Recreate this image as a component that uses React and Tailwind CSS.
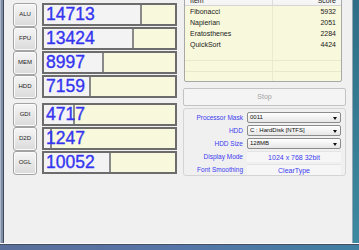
export default function App() {
  const group1 = [
    { label: "ALU", value: "14713", w: 98 },
    { label: "FPU", value: "13424", w: 90 },
    { label: "MEM", value: "8997", w: 60 },
    { label: "HDD", value: "7159", w: 47 },
  ];
  const group2 = [
    { label: "GDI", value: "4717", w: 31 },
    { label: "D2D", value: "1247", w: 8 },
    { label: "OGL", value: "10052", w: 67 },
  ];
  const items = [
    ["Fibonacci", "5932"],
    ["Napierian", "2051"],
    ["Eratosthenes", "2284"],
    ["QuickSort", "4424"],
    ["", ""],
    ["", ""],
    ["", ""],
  ];

  const Row = ({ r }) => (
    <div className="flex items-center h-[23px]">
      <div className="w-[24px] h-[24px] mr-[5px] rounded-[3px] border border-[#a3a3a3] bg-gradient-to-b from-[#f6f6f6] to-[#dadada] flex items-center justify-center text-[6px] text-[#222] shadow-[inset_0_0_0_1px_#fbfbfb]">
        {r.label}
      </div>
      <div className="relative w-[135px] h-[23px] border-2 border-[#6c6c6c] bg-[#f8f8dc] overflow-hidden">
        <div
          className="absolute left-0 top-0 bottom-0 bg-[#f3f3f3] border-r-2 border-[#8a8a8a]"
          style={{ width: r.w }}
        />
        <div className="relative pl-[2px] text-[17.5px] leading-[19px] text-[#3535f0] [-webkit-text-stroke:0.35px_#3535f0]">
          {r.value}
        </div>
      </div>
    </div>
  );

  const Dropdown = ({ text }) => (
    <div className="relative w-[94px] h-[11px] border border-[#8c8c8c] rounded-[2px] bg-gradient-to-b from-[#ffffff] to-[#e6e6e6] flex items-center pl-[2px] text-[6px] leading-[9px] text-[#111]">
      {text}
      <div className="absolute right-[3px] top-[4px] w-0 h-0 border-l-[2.5px] border-r-[2.5px] border-t-[3px] border-l-transparent border-r-transparent border-t-[#111]" />
    </div>
  );

  const Flat = ({ text }) => (
    <div className="w-[94px] h-[11px] bg-[#f6f6f6] border-t border-[#e4e4e4] flex items-center justify-center text-[7px] leading-[9px] text-[#3c3cf0]">
      {text}
    </div>
  );

  const settings = [
    ["Processor Mask", <Dropdown text="0011" />],
    ["HDD", <Dropdown text="C : HardDisk [NTFS]" />],
    ["HDD Size", <Dropdown text="128MB" />],
    ["Display Mode", <Flat text="1024 x 768 32bit" />],
    ["Font Smoothing", <Flat text="ClearType" />],
  ];

  return (
    <div className="w-[359px] h-[250px] overflow-hidden flex flex-col font-['Liberation_Sans',Arial,sans-serif] bg-[#f0f0f0]">
      <div className="flex flex-1 min-h-0">
        <div className="w-[4px] flex">
          <div className="w-[1px] bg-[#aeb8c8]" />
          <div className="w-[2px] bg-[#7f8ca6]" />
          <div className="w-[1px] bg-[#434b5e]" />
        </div>
        <div className="w-[348px] bg-[#f0f0f0] flex">
          <div className="pl-[9px] pt-[3px] flex flex-col">
            <div className="flex flex-col gap-[1px]">
              {group1.map((r) => (
                <Row key={r.label} r={r} />
              ))}
            </div>
            <div className="flex flex-col gap-[1px] mt-[5px]">
              {group2.map((r) => (
                <Row key={r.label} r={r} />
              ))}
            </div>
          </div>
          <div className="ml-[6px] w-[163px] flex flex-col">
            <div className="ml-[1px] w-[158px] h-[92px] mt-[-10px] border border-[#a8a8a8] rounded-[2px] bg-[#f8f8dc] overflow-hidden flex flex-col">
              <div className="h-[15px] shrink-0 flex border-b border-[#d6d6d6] bg-gradient-to-b from-[#ffffff] to-[#f3f3f3] text-[7px] leading-[8px] text-[#222]">
                <div className="w-[88px] border-r border-[#dcdcdc] flex items-end pl-[5px]">Item</div>
                <div className="flex-1 flex items-end justify-end pr-[5px]">Score</div>
              </div>
              {items.map(([n, s], i) => (
                <div
                  key={i}
                  className={`h-[11px] shrink-0 flex text-[7px] leading-[11px] text-[#222] ${n ? "" : "border-b border-[#e8e8cc]"}`}
                >
                  <div className="w-[88px] border-r border-[#eaeace] pl-[5px]">{n}</div>
                  <div className="flex-1 text-right pr-[5px]">{s}</div>
                </div>
              ))}
            </div>
            <div className="mt-[6px] h-[18px] shrink-0 rounded-[2px] border border-[#c3c3c3] bg-[#f4f4f4] flex items-center justify-center text-[7px] text-[#a2a2a2]">
              Stop
            </div>
            <div className="mt-[2px] h-[68px] shrink-0 rounded-[3px] border border-[#d4d4d4] pt-[3px] flex flex-col gap-[2px]">
              {settings.map(([label, field]) => (
                <div key={label} className="flex items-center h-[11px]">
                  <div className="w-[59px] text-right text-[6.5px] leading-[9px] text-[#3c3cf0]">
                    {label}
                  </div>
                  <div className="ml-[4px]">{field}</div>
                </div>
              ))}
            </div>
          </div>
        </div>
        <div className="w-[7px] flex">
          <div className="w-[1px] bg-[#8fa6b4]" />
          <div className="flex-1 bg-gradient-to-b from-[#2f6e86] to-[#3d8aa0]" />
        </div>
      </div>
      <div className="h-[7px] shrink-0 flex flex-col">
        <div className="h-[1px] bg-[#fafafa]" />
        <div className="h-[1px] bg-[#454d60]" />
        <div className="flex-1 bg-gradient-to-r from-[#5a6f9a] via-[#5575a8] to-[#3f7fa0]" />
      </div>
    </div>
  );
}
